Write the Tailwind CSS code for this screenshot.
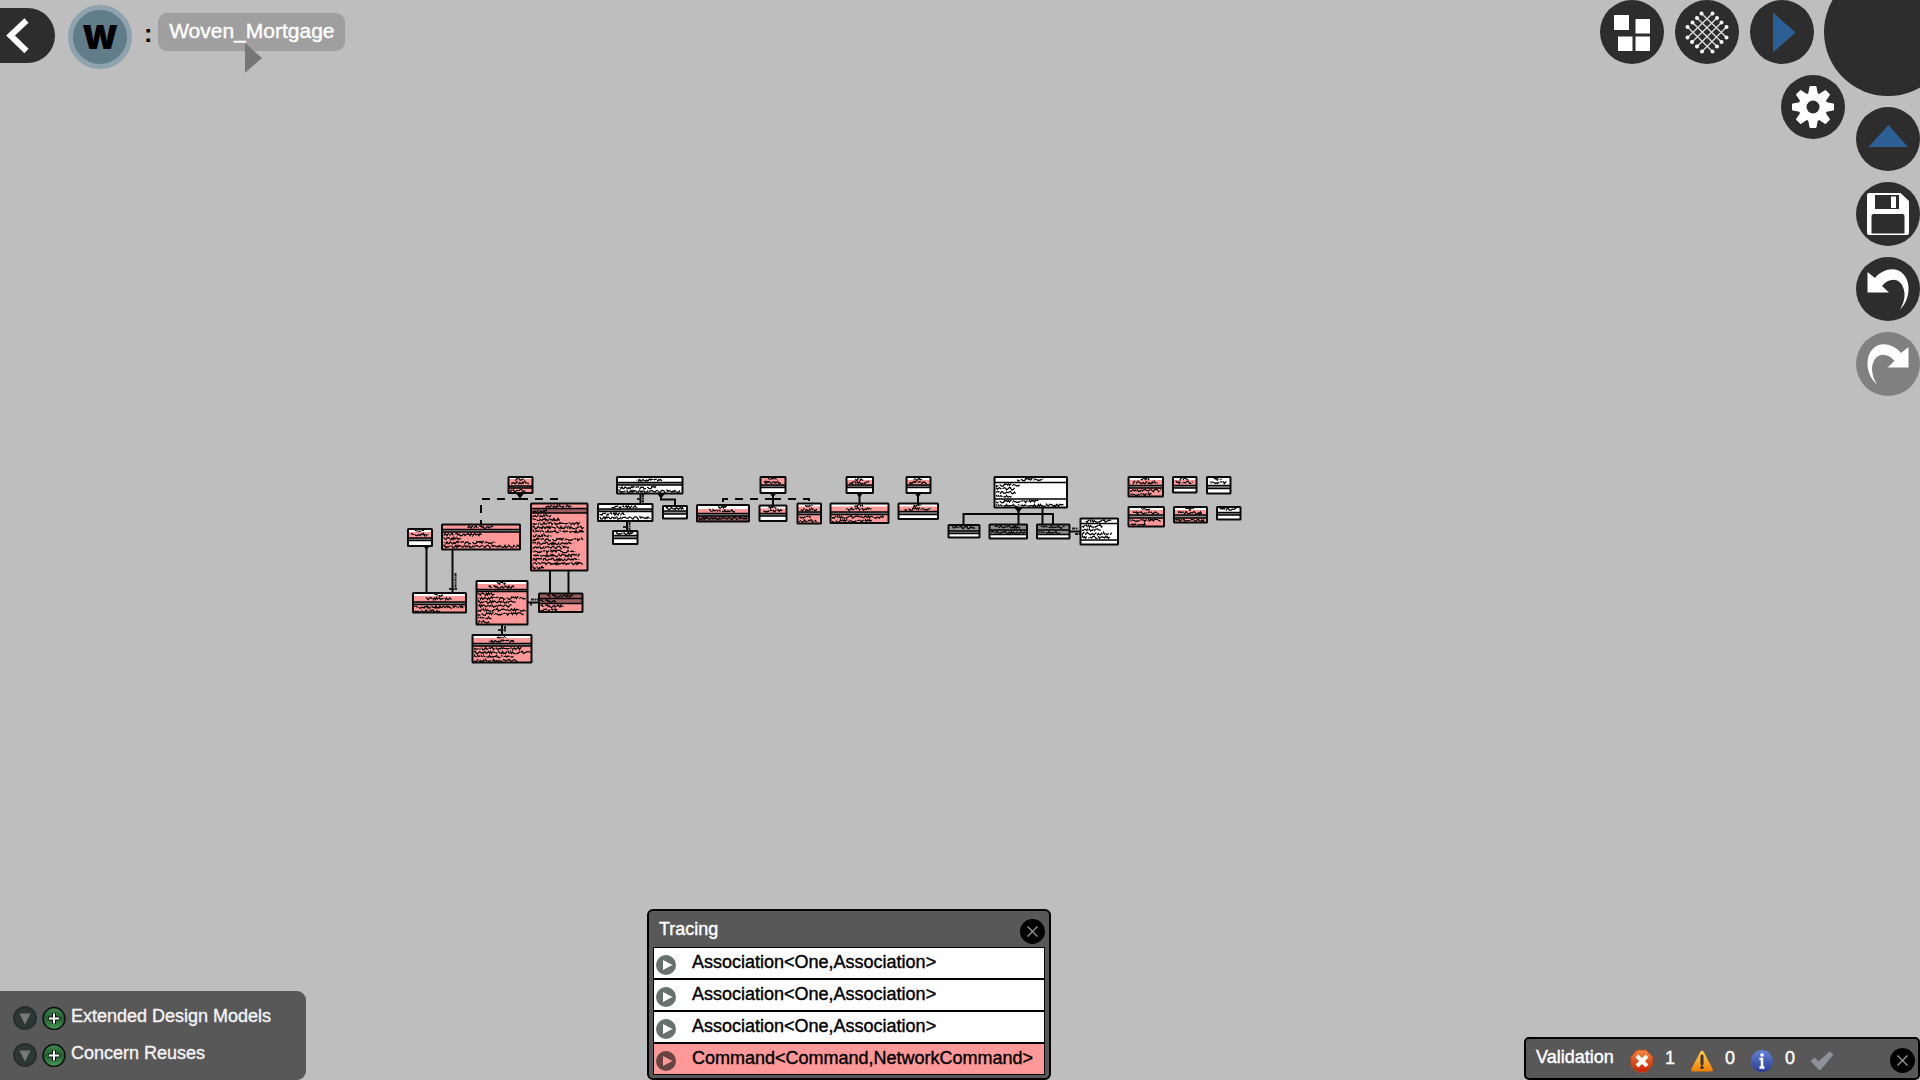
<!DOCTYPE html>
<html lang="en">
<head>
<meta charset="utf-8">
<title>Woven_Mortgage</title>
<script src="https://cdn.jsdelivr.net/npm/@tailwindcss/browser@4"></script>
</head>
<body class="bg-[#bebebe] font-['Liberation_Sans',sans-serif]">
<div class="relative flex min-h-screen flex-col justify-between overflow-hidden">

  <!-- Class diagram canvas -->
  <svg id="diagram" class="absolute inset-0 h-full w-full" role="img" aria-label="Class diagram"></svg>

  <header class="relative flex items-start justify-between">
    <nav class="flex items-start pt-[5px]" aria-label="Breadcrumb">
      <button aria-label="Back" class="mt-[3px] h-[55px] w-[55px] rounded-r-full bg-[#2d2d2d]">
        <svg class="h-[55px] w-[55px]" viewBox="0 0 55 55" fill="none" stroke="#fff" stroke-width="6"><path d="M26.500 12.500 10.500 27.500 26.500 43"/></svg>
      </button>
      <button class="ml-[13px] flex h-16 w-16 items-center justify-center rounded-full border-[5px] border-[#8ea3ae] bg-[#627d8a] font-['Inter',sans-serif] text-[33px] leading-none font-black">W</button>
      <span class="mt-3 ml-3 text-[25px] leading-8 font-bold">:</span>
      <div class="relative mt-2 ml-[6px]">
        <a href="#" class="flex h-[38px] w-[187px] items-center justify-center rounded-[9px] bg-[#9f9f9f] pb-[2px] text-[21px] text-white [-webkit-text-stroke:0.4px_#fff]">Woven_Mortgage</a>
        <svg class="absolute top-[30px] left-[87px] h-[30px] w-[18px]" viewBox="0 0 18 30"><path d="M0 0 17 15 0 30z" fill="#777"/></svg>
      </div>
    </nav>

    <div class="flex gap-[11px]">
      <div class="flex flex-col items-end gap-[11px]">
        <div class="flex gap-[11px] pr-[31px]">
          <button aria-label="Layout" class="h-16 w-16 rounded-full bg-[#2d2d2d]">
            <svg viewBox="0 0 64 64" fill="#fff"><path d="M14 15h15v15H14zM35.500 19H50v14.500H35.500zM18 36.500h14.500V51H18zM35.500 36.500H50V51H35.500z"/></svg>
          </button>
          <button aria-label="Weave" class="h-16 w-16 rounded-full bg-[#2d2d2d]">
            <svg viewBox="0 0 64 64" stroke="#ddd" stroke-width="1.300" fill="none">
              <path d="M37.500 13.500 12.500 37.500M42 18 17 42M46.500 22.500 22 46.500M51.500 27 27 51.500M26.500 13.500 51.500 37.500M22 18 46.500 42M17.500 22.500 42 46.500M12.500 27 37.500 51.500"/>
              <path stroke="#fff" stroke-width="4" stroke-linecap="round" d="M37.500 13.500h0M12.500 37.500h0M42 18h0M17 42h0M46.500 22.500h0M22 46.500h0M51.500 27h0M27 51.500h0M26.500 13.500h0M51.500 37.500h0M22 18h0M46.500 42h0M17.500 22.500h0M42 46.500h0M12.500 27h0M37.500 51.500h0"/>
            </svg>
          </button>
          <button aria-label="Next" class="h-16 w-16 rounded-full bg-[#2d2d2d]">
            <svg viewBox="0 0 64 64" fill="#2c5f94"><path d="M23 12.500 45.500 32.500 23 52.500z"/></svg>
          </button>
        </div>
        <button aria-label="Settings" class="h-16 w-16 rounded-full bg-[#2d2d2d]">
          <svg viewBox="0 0 64 64">
            <g fill="#fff" stroke="#fff" stroke-linejoin="round"><circle cx="32" cy="32" r="14"/>
              <g id="teeth"></g>
            </g>
            <circle cx="32" cy="32" r="6.500" fill="#2d2d2d"/>
          </svg>
        </button>
      </div>
      <div class="flex flex-col gap-[11px] pt-[107px]">
        <button aria-label="Up" class="h-16 w-16 rounded-full bg-[#2d2d2d]">
          <svg viewBox="0 0 64 64" fill="#2c5f94"><path d="M12.500 40 32.500 18 52 40z"/></svg>
        </button>
        <button aria-label="Save" class="h-16 w-16 rounded-full bg-[#2d2d2d]">
          <svg viewBox="0 0 64 64"><path fill="#fff" d="M13 11h31.500L53 19v32q0 2-2 2H13q-2 0-2-2V13q0-2 2-2z"/><path fill="#2d2d2d" d="M19 13h24v14H19zM17.500 32h29q2 0 2 2v17.500h-33V34q0-2 2-2z"/><path fill="#fff" d="M35 14.500h5V26h-5z"/></svg>
        </button>
        <button aria-label="Undo" class="h-16 w-16 rounded-full bg-[#2d2d2d]">
          <svg viewBox="0 0 64 64" fill="#fff"><path d="M11.500 15v20.500H33L26 29c8-10 21-8 22.500 7C49 42 47 47 44 52.500 50 47 53 38 52.500 30 51 10 31 7 19 21z"/></svg>
        </button>
        <button aria-label="Redo" disabled class="h-16 w-16 rounded-full bg-[#808080]">
          <svg viewBox="0 0 64 64" fill="#fff"><path d="M52.500 15v20.500H31.500L38.500 29c-8-10-21-8-22.500 7 0 6 1.500 11 5 16.500C14.500 47 11 38 11.500 30 13 10 33 7 45 21z"/></svg>
        </button>
      </div>
    </div>
    <button aria-label="Menu" class="absolute -top-8 -right-8 h-32 w-32 rounded-full bg-[#2d2d2d]"></button>
  </header>

  <footer class="relative flex items-end">
    <section class="flex h-[89px] w-[306px] flex-col gap-[13px] rounded-r-[9px] bg-[#585858] pt-[15px] pl-[13px]">
      <div class="flex h-6 items-center gap-[5px]">
        <button aria-label="Expand extended design models"><svg class="h-6 w-6" viewBox="0 0 24 24"><circle cx="12" cy="12" r="11" fill="#2c3834" stroke="#27302d" stroke-width="2"/><path d="M6.500 7.500h11L12 18.500z" fill="#757a78"/></svg></button>
        <button aria-label="Add extended design model"><svg class="h-6 w-6" viewBox="0 0 24 24"><circle cx="12" cy="12.500" r="11" fill="url(#green)" stroke="#111" stroke-width="1.500"/><path d="M12 7v11M6.500 12.500h11" stroke="#111" stroke-width="4"/><path d="M12 7.500v10M7 12.500h10" stroke="#fff" stroke-width="2"/></svg></button>
        <span class="pb-[3px] text-[18px] text-[#f2f2f2] [-webkit-text-stroke:0.4px_#f2f2f2]">Extended Design Models</span>
      </div>
      <div class="flex h-6 items-center gap-[5px]">
        <button aria-label="Expand concern reuses"><svg class="h-6 w-6" viewBox="0 0 24 24"><circle cx="12" cy="12" r="11" fill="#2c3834" stroke="#27302d" stroke-width="2"/><path d="M6.500 7.500h11L12 18.500z" fill="#757a78"/></svg></button>
        <button aria-label="Add concern reuse"><svg class="h-6 w-6" viewBox="0 0 24 24"><circle cx="12" cy="12.500" r="11" fill="url(#green)" stroke="#111" stroke-width="1.500"/><path d="M12 7v11M6.500 12.500h11" stroke="#111" stroke-width="4"/><path d="M12 7.500v10M7 12.500h10" stroke="#fff" stroke-width="2"/></svg></button>
        <span class="pb-[3px] text-[18px] text-[#f2f2f2] [-webkit-text-stroke:0.4px_#f2f2f2]">Concern Reuses</span>
      </div>
    </section>

    <section class="ml-[341px] w-[404px] rounded-[6px] border-2 border-black bg-[#585858] px-1 pb-[3px]">
      <div class="flex h-9 items-center justify-between pl-[6px]">
        <h2 class="text-[18px] text-white [-webkit-text-stroke:0.4px_#fff]">Tracing</h2>
        <button aria-label="Close tracing" class="mt-1 h-[25px] w-[25px] rounded-full bg-black"><svg viewBox="0 0 25 25" stroke="#999" stroke-width="1.300"><path d="m7.500 7.500 10 10m0-10-10 10"/></svg></button>
      </div>
      <ul class="flex flex-col gap-[2px] border border-black bg-black text-[18px] text-black [-webkit-text-stroke:0.4px_#000]">
        <li class="flex h-[30px] items-center gap-4 bg-white pl-[2px]"><button aria-label="Trace"><svg class="mt-1 h-5 w-5" viewBox="0 0 20 20"><circle cx="10" cy="10" r="10" fill="#66706c"/><path d="M7 5v10l9.500-5z" fill="#fff"/></svg></button><span class="pb-[2px]">Association&lt;One,Association&gt;</span></li>
        <li class="flex h-[30px] items-center gap-4 bg-white pl-[2px]"><button aria-label="Trace"><svg class="mt-1 h-5 w-5" viewBox="0 0 20 20"><circle cx="10" cy="10" r="10" fill="#66706c"/><path d="M7 5v10l9.500-5z" fill="#fff"/></svg></button><span class="pb-[2px]">Association&lt;One,Association&gt;</span></li>
        <li class="flex h-[30px] items-center gap-4 bg-white pl-[2px]"><button aria-label="Trace"><svg class="mt-1 h-5 w-5" viewBox="0 0 20 20"><circle cx="10" cy="10" r="10" fill="#66706c"/><path d="M7 5v10l9.500-5z" fill="#fff"/></svg></button><span class="pb-[2px]">Association&lt;One,Association&gt;</span></li>
        <li class="flex h-[30px] items-center gap-4 bg-[#ff9999] pl-[2px]"><button aria-label="Trace"><svg class="mt-1 h-5 w-5" viewBox="0 0 20 20"><circle cx="10" cy="10" r="10" fill="#664440"/><path d="M7 5v10l9.500-5z" fill="#ff9999"/></svg></button><span class="pb-[2px]">Command&lt;Command,NetworkCommand&gt;</span></li>
      </ul>
    </section>

    <section class="ml-auto flex h-[43px] w-[396px] items-center rounded-[5px] border-2 border-black bg-[#585858] pl-[10px] text-[18px] text-white [-webkit-text-stroke:0.4px_#fff]">
      <h2 class="w-[94px] pb-[2px]">Validation</h2>
      <svg class="mt-[5px] h-6 w-6" viewBox="0 0 24 24"><path d="M7.500 1h8.500l6.500 6.500V16L16 23H7.500L1 16.500v-9z" fill="url(#red)" stroke="#b94a20"/><path d="m7 7 10 10m0-10L7 17" stroke="#fff" stroke-width="4"/></svg>
      <span class="ml-[11px] w-[25px]">1</span>
      <svg class="mt-[5px] h-6 w-6" viewBox="0 0 24 24"><path d="M12 1.500q1 0 2 2l8.500 16q1 3-1.500 3H3q-2.500 0-1.500-3L10 3.500q1-2 2-2z" fill="url(#amber)"/><path d="M12 7v8" stroke="#333" stroke-width="3" stroke-linecap="round"/><circle cx="12" cy="18.500" r="1.700" fill="#333"/></svg>
      <span class="ml-[11px] w-[25px]">0</span>
      <svg class="mt-[5px] h-6 w-6" viewBox="0 0 24 24"><circle cx="12" cy="12" r="11" fill="url(#blue)"/><path d="M9.500 10H12v8.500M9.500 18.500h5" stroke="#fff" stroke-width="2.500" fill="none"/><circle cx="12" cy="6" r="1.800" fill="#fff"/></svg>
      <span class="ml-[11px] w-[25px]">0</span>
      <svg class="mt-1 h-6 w-6" viewBox="0 0 24 24"><path d="m.500 12 4-3.500 4 4L19.500 2.500l4 3L10.500 21H9z" fill="#8f9198"/></svg>
      <button aria-label="Close validation" class="mt-[3px] mr-[3px] ml-auto h-[25px] w-[25px] rounded-full bg-black"><svg viewBox="0 0 25 25" stroke="#999" stroke-width="1.300"><path d="m7.500 7.500 10 10m0-10-10 10"/></svg></button>
    </section>
  </footer>

  <svg class="absolute h-0 w-0" aria-hidden="true"><defs>
    <linearGradient id="green" x2="0" y2="1"><stop stop-color="#3f8a4d"/><stop offset=".5" stop-color="#235c31"/><stop offset="1" stop-color="#46a055"/></linearGradient>
    <linearGradient id="red" x2="0" y2="1"><stop stop-color="#f28a3c"/><stop offset="1" stop-color="#c81e00"/></linearGradient>
    <linearGradient id="amber" x2="0" y2="1"><stop stop-color="#ffd050"/><stop offset="1" stop-color="#f57f00"/></linearGradient>
    <linearGradient id="blue" x2="0" y2="1"><stop stop-color="#6482d6"/><stop offset="1" stop-color="#2b3c94"/></linearGradient>
  </defs></svg>
</div>

<script>
  const NS = 'http://www.w3.org/2000/svg';
  const add = (parent, tag, attrs) => {
    const el = document.createElementNS(NS, tag);
    for (const k in attrs) el.setAttribute(k, attrs[k]);
    parent.appendChild(el);
  };
  for (let a = 0; a < 360; a += 45)
    add(document.getElementById('teeth'), 'path', {d: 'M28 20 29.500 12h5L36 20z', 'stroke-width': 2, transform: `rotate(${a} 32 32)`});

  const svg = document.getElementById('diagram');
  const P = '#ff9999', W = '#fff', G = '#8c8c8c', D = '#9a5c5c';

  // Connectors between classes
  [
    'M426.500 546V593M452.500 550V593M520 493V500M550 571V593M568.500 571V593M528 602.500H539M502 624V635',
    'M640.500 493V504M661 493V499.500H675V506M627 521V531M773 493V505M859.500 493V503M918 493V503',
    'M963.500 525V514H1053V525M1018.500 508V524M1042.500 508V524M1070 531.500H1080'
  ].forEach(d => add(svg, 'path', {d, stroke: '#080808', 'stroke-width': 2, fill: 'none'}));
  add(svg, 'path', {d: 'M520 499H481V525M520 499H559V504M773 499H723V506M773 499H809V504', stroke: '#080808', 'stroke-width': 2, 'stroke-dasharray': '8 7', fill: 'none'});
  add(svg, 'path', {d: 'M517 494h6l-3 4zM423.500 546h6l-3 3zM658 494h6l-3 4zM770 493h6l-3 4zM856.500 493h6l-3 4zM915 493h6l-3 4zM1015 508h7l-3.500 4z', fill: '#000', stroke: '#000'});
  add(svg, 'path', {d: 'M455.500 573V590M449 589H457M505 626V632M498 630H505M531 599.500H538M531 605.500V602M637 499H641M643 494V503M623 527H627M629.500 522V530M1072 528.500H1078M1075 534H1080', stroke: '#222', 'stroke-width': 2, 'stroke-dasharray': '3 .6 1.500 .5', fill: 'none'});

  // x, y, w, h, title fill, white strip height, attribute line, operation line, operation fill, title rows, row widths, attribute rows
  const nodes = [
    [508.5,477,24,16,P,2,9,11,P,[2,5.5],[16]],
    [531,503.5,56.5,67,P,0,5,9.5,P,[2.5],[20,28,48,52,52,19,51,40,37,43,48,47,51,12],[15]],
    [442,524.5,78,25,P,0,5,7.5,P,[2.5],[39,18,52,76]],
    [408,529,24,17,P,3,9,11.5,W,[2,5.5],[]],
    [413,593,53,19.5,P,3,9,11.5,P,[2,5.5],[50,26]],
    [476.5,581,51,43.5,P,3,8.5,10.5,P,[2,6],[17,48,38,34,48,46,14,12]],
    [539,593.5,43.5,18.5,D,0,5,10,P,[2.5],[23,17],[16]],
    [472.5,635,59,27.5,P,3,8.5,11,P,[2,6],[48,57,40,44]],
    [617,477,65.5,16.5,W,0,5.5,8,W,[3],[38,62]],
    [598,504,54.5,17,W,0,5,7.5,W,[3],[27,51]],
    [663,506,24,12.5,W,0,5,8,W,[2.5],[]],
    [613,531,24.5,13,W,0,4.5,7.5,W,[2.5],[]],
    [697,505,52,16.5,P,4,8.5,11,D,[2,6],[49]],
    [760.5,477,25,16,P,1,8,10.5,W,[2,5.5],[]],
    [759.5,505.5,27,15.5,P,3,8,10.5,W,[2,5.5],[]],
    [797.5,503.5,23.5,20,P,3,8.5,11,P,[2,6],[12,18]],
    [846.5,477,26.5,16,P,3,8,10.5,W,[2,5.5],[]],
    [830.5,503.5,58,19.5,P,3,8.5,11,P,[2,5.5],[52,40]],
    [906.5,477,24,16,P,3,8,10.5,W,[2,5.5],[]],
    [898.5,503.5,39.5,15.5,P,3,8,11,W,[2,5.5],[]],
    [994.5,477,72.5,30.5,W,0,5.5,22,W,[2.5],[43,68],[24,19,20,16]],
    [948.5,525,31,12.5,G,0,6,8.5,W,[2.5],[]],
    [989.5,524.5,37.5,14,G,0,5.5,10,W,[2.5],[],[35]],
    [1037,524.5,32.5,14,G,0,5.5,10,W,[2.5],[],[22]],
    [1080.5,518.5,37.5,26,W,0,5,21.5,W,[2.5],[],[21,19,30,28]],
    [1128.5,477,34.5,19.5,P,3,8.5,11,P,[2,5.5],[31,22]],
    [1173,477,23.5,15.5,P,3,8.5,11,W,[2,5.5],[]],
    [1207,477,23.5,16.5,W,0,8.5,11.5,W,[2,5.5],[]],
    [1128.5,507,35.5,19.5,P,3,8,11,P,[2,6],[31,16]],
    [1174,507,33,15.5,P,3,8,11,P,[2,6],[29]],
    [1217,507,23.5,12.5,W,0,5.5,8,W,[2.5],[]]
  ];

  // Member labels at far zoom: an uneven run of short strokes
  const scribble = (x1, x2, y, k) => {
    const len = x2 - x1;
    let d = `M${x1} ${y}`, seed = k * 37 + 11;
    for (let t = 0; t < len; t += 1) {
      seed = (seed * 73 + 41) % 997;
      d += `L${x1 + t} ${y + (seed % 5 - 2) * 0.55}`;
      if (seed % 7 === 0) d += `M${x1 + t + 1} ${y}`;
    }
    add(svg, 'path', {d, fill: 'none', stroke: '#000', 'stroke-width': 1.2});
  };
  nodes.forEach(([x,y,w,h,tf,strip,a,o,of,titles,ops,attrs = []], n) => {
    const rect = (dy, hh, fill) => add(svg, 'rect', {x, y: y + dy, width: w, height: hh, fill});
    rect(0, h, of);
    rect(0, a, tf);
    if (strip) rect(0, strip, W);
    rect(a, o - a, attrs.length ? (of === P ? D : tf) : G);
    titles.forEach((t, i) => {
      const half = i === titles.length - 1 ? Math.min(w * .36, 13) : 4.5;
      scribble(x + w / 2 - half, x + w / 2 + half, y + t, n + i);
    });
    attrs.forEach((v, i) => scribble(x + 2, x + 2 + v, y + a + 2.5 + i * 3.8, n + i));
    ops.forEach((v, i) => scribble(x + 2, x + 2 + v, y + o + 2.5 + i * 4, n + i * 3));
    add(svg, 'path', {d: `M${x} ${y + a}h${w}M${x} ${y + o}h${w}`, stroke: '#000', 'stroke-width': 1.5});
    add(svg, 'rect', {x, y, width: w, height: h, fill: 'none', stroke: '#0a0a0a', 'stroke-width': 2, rx: .5});
  });
</script>
</body>
</html>
